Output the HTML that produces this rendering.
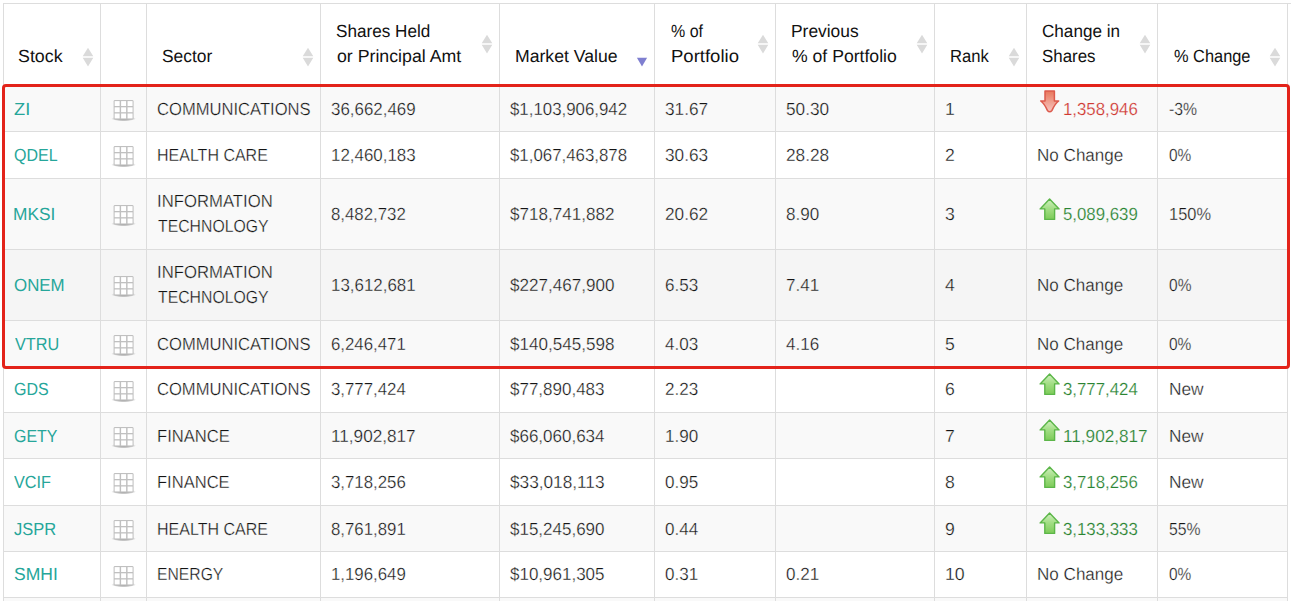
<!DOCTYPE html>
<html lang="en"><head><meta charset="utf-8"><title>Holdings</title>
<style>
html,body{margin:0;padding:0;background:#fff;}
body{width:1291px;height:601px;overflow:hidden;position:relative;
 font-family:"Liberation Sans",sans-serif;font-size:17.6px;line-height:24.64px;color:#141414;text-rendering:geometricPrecision;}
#wrap{position:absolute;left:3px;top:3px;width:1288px;border-top:1px solid #ddd;}
table{border-collapse:separate;border-spacing:0;table-layout:fixed;width:1285px;border-right:1px solid #ddd;margin:0;}
th,td{box-sizing:border-box;position:relative;border-left:1px solid #ddd;white-space:nowrap;text-align:left;font-weight:normal;overflow:visible;}
th{height:81px;padding:0 0 16px 15px;vertical-align:bottom;color:#111;line-height:25px;}
td{border-top:1px solid #ddd;padding:0 0 0 10px;vertical-align:middle;-webkit-text-stroke:.3px var(--bg);}
tr.odd{--bg:#f9f9f9;} tr.even{--bg:#fff;} tr.hover{--bg:#f5f5f5;}
tbody tr{background:var(--bg);}
tr.dy td{padding-top:2px;}
td.chg{padding-left:36.2px;}
.t{display:inline-block;transform-origin:0 50%;}
.tk{color:#26a69a;-webkit-text-stroke:0;}
.up{color:#2a8432;-webkit-text-stroke-width:.2px;}
.dn{color:#d03a33;-webkit-text-stroke-width:.2px;}
svg{position:absolute;overflow:visible;}
#box{position:absolute;left:2px;top:84px;width:1288px;height:285px;box-sizing:border-box;
 border:3px solid #e3231a;border-radius:4px;}
</style></head><body>
<div id="wrap"><table>
<colgroup><col style="width:97px"><col style="width:46px"><col style="width:174px"><col style="width:179px"><col style="width:155px"><col style="width:121px"><col style="width:159px"><col style="width:92px"><col style="width:131px"><col style="width:130px"></colgroup>
<thead><tr>
<th><span class="t" style="transform:scaleX(1.0122);margin-left:-1.00px">Stock</span><svg style="right:6px;top:43px" width="12" height="20" viewBox="0 0 12 20"><path d="M6 0.8 L11.3 9.3 L0.7 9.3 Z M6 19.4 L11.3 10.7 L0.7 10.7 Z" fill="#dadada"/></svg></th>
<th></th>
<th><span class="t" style="transform:scaleX(0.9893)">Sector</span><svg style="right:6px;top:43px" width="12" height="20" viewBox="0 0 12 20"><path d="M6 0.8 L11.3 9.3 L0.7 9.3 Z M6 19.4 L11.3 10.7 L0.7 10.7 Z" fill="#dadada"/></svg></th>
<th><span class="t" style="transform:scaleX(0.9737)">Shares Held</span><br><span class="t" style="transform:scaleX(1.0077);margin-left:1.01px">or Principal Amt</span><svg style="right:6px;top:30px" width="12" height="20" viewBox="0 0 12 20"><path d="M6 0.8 L11.3 9.3 L0.7 9.3 Z M6 19.4 L11.3 10.7 L0.7 10.7 Z" fill="#dadada"/></svg></th>
<th><span class="t" style="transform:scaleX(1.0016)">Market Value</span><svg style="right:6px;top:43px" width="12" height="20" viewBox="0 0 12 20"><path d="M6 19.4 L11.1 10.8 L0.9 10.8 Z" fill="#7f7fd0"/></svg></th>
<th><span class="t" style="transform:scaleX(0.9106);margin-left:1.00px">% of</span><br><span class="t" style="transform:scaleX(1.0525);margin-left:1.01px">Portfolio</span><svg style="right:6px;top:30px" width="12" height="20" viewBox="0 0 12 20"><path d="M6 0.8 L11.3 9.3 L0.7 9.3 Z M6 19.4 L11.3 10.7 L0.7 10.7 Z" fill="#dadada"/></svg></th>
<th><span class="t" style="transform:scaleX(0.9883)">Previous</span><br><span class="t" style="transform:scaleX(1.0016);margin-left:1.01px">% of Portfolio</span><svg style="right:6px;top:30px" width="12" height="20" viewBox="0 0 12 20"><path d="M6 0.8 L11.3 9.3 L0.7 9.3 Z M6 19.4 L11.3 10.7 L0.7 10.7 Z" fill="#dadada"/></svg></th>
<th><span class="t" style="transform:scaleX(0.9451)">Rank</span><svg style="right:6px;top:43px" width="12" height="20" viewBox="0 0 12 20"><path d="M6 0.8 L11.3 9.3 L0.7 9.3 Z M6 19.4 L11.3 10.7 L0.7 10.7 Z" fill="#dadada"/></svg></th>
<th><span class="t" style="transform:scaleX(0.9722)">Change in</span><br><span class="t" style="transform:scaleX(0.9598)">Shares</span><svg style="right:6px;top:30px" width="12" height="20" viewBox="0 0 12 20"><path d="M6 0.8 L11.3 9.3 L0.7 9.3 Z M6 19.4 L11.3 10.7 L0.7 10.7 Z" fill="#dadada"/></svg></th>
<th><span class="t" style="transform:scaleX(0.9307);margin-left:1.01px">% Change</span><svg style="right:6px;top:43px" width="12" height="20" viewBox="0 0 12 20"><path d="M6 0.8 L11.3 9.3 L0.7 9.3 Z M6 19.4 L11.3 10.7 L0.7 10.7 Z" fill="#dadada"/></svg></th>
</tr></thead>
<tbody>
<tr class="odd dy" style="height:46px"><td><span class="t tk" style="transform:scaleX(1.0377)">ZI</span></td><td><svg style="left:10px;top:13px" width="26" height="23" viewBox="0 0 26 23"><defs><radialGradient id="sh0" cx="50%" cy="50%" r="50%"><stop offset="0" stop-color="#777" stop-opacity=".9"/><stop offset=".7" stop-color="#909090" stop-opacity=".5"/><stop offset="1" stop-color="#aaa" stop-opacity="0"/></radialGradient></defs><ellipse cx="12.6" cy="19.7" rx="12.4" ry="2.6" fill="url(#sh0)"/><rect x="2.6" y="1" width="20" height="19.5" rx="1.4" fill="#c0c0c0"/><rect x="3.65" y="2.10" width="5" height="4.9" fill="#fff"/><rect x="10.10" y="2.10" width="5" height="4.9" fill="#fff"/><rect x="16.55" y="2.10" width="5" height="4.9" fill="#fff"/><rect x="3.65" y="8.30" width="5" height="4.9" fill="#fff"/><rect x="10.10" y="8.30" width="5" height="4.9" fill="#fff"/><rect x="16.55" y="8.30" width="5" height="4.9" fill="#fff"/><rect x="3.65" y="14.50" width="5" height="4.9" fill="#fff"/><rect x="10.10" y="14.50" width="5" height="4.9" fill="#fff"/><rect x="16.55" y="14.50" width="5" height="4.9" fill="#fff"/></svg></td><td><span class="t" style="transform:scaleX(0.9428)">COMMUNICATIONS</span></td><td><span class="t" style="transform:scaleX(0.9614)">36,662,469</span></td><td><span class="t" style="transform:scaleX(0.9575)">$1,103,906,942</span></td><td><span class="t" style="transform:scaleX(0.9784)">31.67</span></td><td><span class="t" style="transform:scaleX(0.9784)">50.30</span></td><td><span class="t">1</span></td><td class="chg"><svg style="left:12px;top:4px" width="22" height="24" viewBox="0 0 22 24"><defs><linearGradient id="dg0" x1="0" y1="0" x2="0" y2="1"><stop offset="0" stop-color="#e8785c"/><stop offset="1" stop-color="#f7c4c0"/></linearGradient></defs><path d="M6 1 L15.4 1 L15.4 11 L19.7 11 C16.4 13.2 14.6 16.8 13 20.4 Q10.7 23 8.4 20.4 C6.8 16.8 5 13.2 1.7 11 L6 11 Z" fill="url(#dg0)" stroke="#dc5a4c" stroke-width="1.5" stroke-linejoin="round"/></svg><span class="t dn" style="transform:scaleX(0.9554);margin-left:-0.19px">1,358,946</span></td><td><span class="t" style="transform:scaleX(0.8973);margin-left:1.00px">-3%</span></td></tr>
<tr class="even" style="height:47px"><td><span class="t tk" style="transform:scaleX(0.9091)">QDEL</span></td><td><svg style="left:10px;top:13px" width="26" height="23" viewBox="0 0 26 23"><defs><radialGradient id="sh1" cx="50%" cy="50%" r="50%"><stop offset="0" stop-color="#777" stop-opacity=".9"/><stop offset=".7" stop-color="#909090" stop-opacity=".5"/><stop offset="1" stop-color="#aaa" stop-opacity="0"/></radialGradient></defs><ellipse cx="12.6" cy="19.7" rx="12.4" ry="2.6" fill="url(#sh1)"/><rect x="2.6" y="1" width="20" height="19.5" rx="1.4" fill="#c0c0c0"/><rect x="3.65" y="2.10" width="5" height="4.9" fill="#fff"/><rect x="10.10" y="2.10" width="5" height="4.9" fill="#fff"/><rect x="16.55" y="2.10" width="5" height="4.9" fill="#fff"/><rect x="3.65" y="8.30" width="5" height="4.9" fill="#fff"/><rect x="10.10" y="8.30" width="5" height="4.9" fill="#fff"/><rect x="16.55" y="8.30" width="5" height="4.9" fill="#fff"/><rect x="3.65" y="14.50" width="5" height="4.9" fill="#fff"/><rect x="10.10" y="14.50" width="5" height="4.9" fill="#fff"/><rect x="16.55" y="14.50" width="5" height="4.9" fill="#fff"/></svg></td><td><span class="t" style="transform:scaleX(0.9095)">HEALTH CARE</span></td><td><span class="t" style="transform:scaleX(0.9614)">12,460,183</span></td><td><span class="t" style="transform:scaleX(0.9575)">$1,067,463,878</span></td><td><span class="t" style="transform:scaleX(0.9784)">30.63</span></td><td><span class="t" style="transform:scaleX(0.9784)">28.28</span></td><td><span class="t">2</span></td><td><span class="t" style="transform:scaleX(0.9699)">No Change</span></td><td><span class="t" style="transform:scaleX(0.8778);margin-left:1.01px">0%</span></td></tr>
<tr class="odd" style="height:71px"><td><span class="t tk" style="transform:scaleX(0.9840);margin-left:-1.00px">MKSI</span></td><td><svg style="left:10px;top:25px" width="26" height="23" viewBox="0 0 26 23"><defs><radialGradient id="sh2" cx="50%" cy="50%" r="50%"><stop offset="0" stop-color="#777" stop-opacity=".9"/><stop offset=".7" stop-color="#909090" stop-opacity=".5"/><stop offset="1" stop-color="#aaa" stop-opacity="0"/></radialGradient></defs><ellipse cx="12.6" cy="19.7" rx="12.4" ry="2.6" fill="url(#sh2)"/><rect x="2.6" y="1" width="20" height="19.5" rx="1.4" fill="#c0c0c0"/><rect x="3.65" y="2.10" width="5" height="4.9" fill="#fff"/><rect x="10.10" y="2.10" width="5" height="4.9" fill="#fff"/><rect x="16.55" y="2.10" width="5" height="4.9" fill="#fff"/><rect x="3.65" y="8.30" width="5" height="4.9" fill="#fff"/><rect x="10.10" y="8.30" width="5" height="4.9" fill="#fff"/><rect x="16.55" y="8.30" width="5" height="4.9" fill="#fff"/><rect x="3.65" y="14.50" width="5" height="4.9" fill="#fff"/><rect x="10.10" y="14.50" width="5" height="4.9" fill="#fff"/><rect x="16.55" y="14.50" width="5" height="4.9" fill="#fff"/></svg></td><td><span class="t" style="transform:scaleX(0.9496)">INFORMATION</span><br><span class="t" style="transform:scaleX(0.8976);margin-left:1.01px">TECHNOLOGY</span></td><td><span class="t" style="transform:scaleX(0.9554)">8,482,732</span></td><td><span class="t" style="transform:scaleX(0.9700)">$718,741,882</span></td><td><span class="t" style="transform:scaleX(0.9784)">20.62</span></td><td><span class="t" style="transform:scaleX(0.9696)">8.90</span></td><td><span class="t">3</span></td><td class="chg"><svg style="left:12px;top:19px" width="22" height="23" viewBox="0 0 22 23"><defs><linearGradient id="ug2" x1="0" y1="0" x2="0" y2="1"><stop offset="0" stop-color="#d2f0c2"/><stop offset=".45" stop-color="#a5df88"/><stop offset="1" stop-color="#7ccb58"/></linearGradient></defs><path d="M10.6 0.9 L20.1 10.9 L15.6 10.9 L15.6 21.4 L5.8 21.4 L5.8 10.9 L1.1 10.9 Z" fill="url(#ug2)" stroke="#5cb649" stroke-width="1.4" stroke-linejoin="round"/></svg><span class="t up" style="transform:scaleX(0.9554);margin-left:-0.19px">5,089,639</span></td><td><span class="t" style="transform:scaleX(0.9329);margin-left:1.01px">150%</span></td></tr>
<tr class="even hover" style="height:71px"><td><span class="t tk" style="transform:scaleX(0.9597)">ONEM</span></td><td><svg style="left:10px;top:25px" width="26" height="23" viewBox="0 0 26 23"><defs><radialGradient id="sh3" cx="50%" cy="50%" r="50%"><stop offset="0" stop-color="#777" stop-opacity=".9"/><stop offset=".7" stop-color="#909090" stop-opacity=".5"/><stop offset="1" stop-color="#aaa" stop-opacity="0"/></radialGradient></defs><ellipse cx="12.6" cy="19.7" rx="12.4" ry="2.6" fill="url(#sh3)"/><rect x="2.6" y="1" width="20" height="19.5" rx="1.4" fill="#c0c0c0"/><rect x="3.65" y="2.10" width="5" height="4.9" fill="#fff"/><rect x="10.10" y="2.10" width="5" height="4.9" fill="#fff"/><rect x="16.55" y="2.10" width="5" height="4.9" fill="#fff"/><rect x="3.65" y="8.30" width="5" height="4.9" fill="#fff"/><rect x="10.10" y="8.30" width="5" height="4.9" fill="#fff"/><rect x="16.55" y="8.30" width="5" height="4.9" fill="#fff"/><rect x="3.65" y="14.50" width="5" height="4.9" fill="#fff"/><rect x="10.10" y="14.50" width="5" height="4.9" fill="#fff"/><rect x="16.55" y="14.50" width="5" height="4.9" fill="#fff"/></svg></td><td><span class="t" style="transform:scaleX(0.9500)">INFORMATION</span><br><span class="t" style="transform:scaleX(0.8984);margin-left:1.00px">TECHNOLOGY</span></td><td><span class="t" style="transform:scaleX(0.9614)">13,612,681</span></td><td><span class="t" style="transform:scaleX(0.9700)">$227,467,900</span></td><td><span class="t" style="transform:scaleX(0.9696)">6.53</span></td><td><span class="t" style="transform:scaleX(0.9696)">7.41</span></td><td><span class="t">4</span></td><td><span class="t" style="transform:scaleX(0.9688)">No Change</span></td><td><span class="t" style="transform:scaleX(0.8817);margin-left:1.01px">0%</span></td></tr>
<tr class="odd dy" style="height:46px"><td><span class="t tk" style="transform:scaleX(0.9246);margin-left:1.01px">VTRU</span></td><td><svg style="left:10px;top:13px" width="26" height="23" viewBox="0 0 26 23"><defs><radialGradient id="sh4" cx="50%" cy="50%" r="50%"><stop offset="0" stop-color="#777" stop-opacity=".9"/><stop offset=".7" stop-color="#909090" stop-opacity=".5"/><stop offset="1" stop-color="#aaa" stop-opacity="0"/></radialGradient></defs><ellipse cx="12.6" cy="19.7" rx="12.4" ry="2.6" fill="url(#sh4)"/><rect x="2.6" y="1" width="20" height="19.5" rx="1.4" fill="#c0c0c0"/><rect x="3.65" y="2.10" width="5" height="4.9" fill="#fff"/><rect x="10.10" y="2.10" width="5" height="4.9" fill="#fff"/><rect x="16.55" y="2.10" width="5" height="4.9" fill="#fff"/><rect x="3.65" y="8.30" width="5" height="4.9" fill="#fff"/><rect x="10.10" y="8.30" width="5" height="4.9" fill="#fff"/><rect x="16.55" y="8.30" width="5" height="4.9" fill="#fff"/><rect x="3.65" y="14.50" width="5" height="4.9" fill="#fff"/><rect x="10.10" y="14.50" width="5" height="4.9" fill="#fff"/><rect x="16.55" y="14.50" width="5" height="4.9" fill="#fff"/></svg></td><td><span class="t" style="transform:scaleX(0.9428)">COMMUNICATIONS</span></td><td><span class="t" style="transform:scaleX(0.9554)">6,246,471</span></td><td><span class="t" style="transform:scaleX(0.9700)">$140,545,598</span></td><td><span class="t" style="transform:scaleX(0.9696)">4.03</span></td><td><span class="t" style="transform:scaleX(0.9696)">4.16</span></td><td><span class="t">5</span></td><td><span class="t" style="transform:scaleX(0.9680)">No Change</span></td><td><span class="t" style="transform:scaleX(0.8806);margin-left:1.00px">0%</span></td></tr>
<tr class="even" style="height:46px"><td><span class="t tk" style="transform:scaleX(0.9101)">GDS</span></td><td><svg style="left:10px;top:13px" width="26" height="23" viewBox="0 0 26 23"><defs><radialGradient id="sh5" cx="50%" cy="50%" r="50%"><stop offset="0" stop-color="#777" stop-opacity=".9"/><stop offset=".7" stop-color="#909090" stop-opacity=".5"/><stop offset="1" stop-color="#aaa" stop-opacity="0"/></radialGradient></defs><ellipse cx="12.6" cy="19.7" rx="12.4" ry="2.6" fill="url(#sh5)"/><rect x="2.6" y="1" width="20" height="19.5" rx="1.4" fill="#c0c0c0"/><rect x="3.65" y="2.10" width="5" height="4.9" fill="#fff"/><rect x="10.10" y="2.10" width="5" height="4.9" fill="#fff"/><rect x="16.55" y="2.10" width="5" height="4.9" fill="#fff"/><rect x="3.65" y="8.30" width="5" height="4.9" fill="#fff"/><rect x="10.10" y="8.30" width="5" height="4.9" fill="#fff"/><rect x="16.55" y="8.30" width="5" height="4.9" fill="#fff"/><rect x="3.65" y="14.50" width="5" height="4.9" fill="#fff"/><rect x="10.10" y="14.50" width="5" height="4.9" fill="#fff"/><rect x="16.55" y="14.50" width="5" height="4.9" fill="#fff"/></svg></td><td><span class="t" style="transform:scaleX(0.9420)">COMMUNICATIONS</span></td><td><span class="t" style="transform:scaleX(0.9554)">3,777,424</span></td><td><span class="t" style="transform:scaleX(0.9661)">$77,890,483</span></td><td><span class="t" style="transform:scaleX(0.9696)">2.23</span></td><td></td><td><span class="t">6</span></td><td class="chg"><svg style="left:12px;top:6px" width="22" height="23" viewBox="0 0 22 23"><defs><linearGradient id="ug5" x1="0" y1="0" x2="0" y2="1"><stop offset="0" stop-color="#d2f0c2"/><stop offset=".45" stop-color="#a5df88"/><stop offset="1" stop-color="#7ccb58"/></linearGradient></defs><path d="M10.6 0.9 L20.1 10.9 L15.6 10.9 L15.6 21.4 L5.8 21.4 L5.8 10.9 L1.1 10.9 Z" fill="url(#ug5)" stroke="#5cb649" stroke-width="1.4" stroke-linejoin="round"/></svg><span class="t up" style="transform:scaleX(0.9554);margin-left:-0.19px">3,777,424</span></td><td><span class="t" style="transform:scaleX(0.9830);margin-left:1.00px">New</span></td></tr>
<tr class="odd dy" style="height:46px"><td><span class="t tk" style="transform:scaleX(0.9066)">GETY</span></td><td><svg style="left:10px;top:13px" width="26" height="23" viewBox="0 0 26 23"><defs><radialGradient id="sh6" cx="50%" cy="50%" r="50%"><stop offset="0" stop-color="#777" stop-opacity=".9"/><stop offset=".7" stop-color="#909090" stop-opacity=".5"/><stop offset="1" stop-color="#aaa" stop-opacity="0"/></radialGradient></defs><ellipse cx="12.6" cy="19.7" rx="12.4" ry="2.6" fill="url(#sh6)"/><rect x="2.6" y="1" width="20" height="19.5" rx="1.4" fill="#c0c0c0"/><rect x="3.65" y="2.10" width="5" height="4.9" fill="#fff"/><rect x="10.10" y="2.10" width="5" height="4.9" fill="#fff"/><rect x="16.55" y="2.10" width="5" height="4.9" fill="#fff"/><rect x="3.65" y="8.30" width="5" height="4.9" fill="#fff"/><rect x="10.10" y="8.30" width="5" height="4.9" fill="#fff"/><rect x="16.55" y="8.30" width="5" height="4.9" fill="#fff"/><rect x="3.65" y="14.50" width="5" height="4.9" fill="#fff"/><rect x="10.10" y="14.50" width="5" height="4.9" fill="#fff"/><rect x="16.55" y="14.50" width="5" height="4.9" fill="#fff"/></svg></td><td><span class="t" style="transform:scaleX(0.9446)">FINANCE</span></td><td><span class="t" style="transform:scaleX(0.9759)">11,902,817</span></td><td><span class="t" style="transform:scaleX(0.9661)">$66,060,634</span></td><td><span class="t" style="transform:scaleX(0.9696)">1.90</span></td><td></td><td><span class="t">7</span></td><td class="chg"><svg style="left:12px;top:6px" width="22" height="23" viewBox="0 0 22 23"><defs><linearGradient id="ug6" x1="0" y1="0" x2="0" y2="1"><stop offset="0" stop-color="#d2f0c2"/><stop offset=".45" stop-color="#a5df88"/><stop offset="1" stop-color="#7ccb58"/></linearGradient></defs><path d="M10.6 0.9 L20.1 10.9 L15.6 10.9 L15.6 21.4 L5.8 21.4 L5.8 10.9 L1.1 10.9 Z" fill="url(#ug6)" stroke="#5cb649" stroke-width="1.4" stroke-linejoin="round"/></svg><span class="t up" style="transform:scaleX(0.9759);margin-left:-0.19px">11,902,817</span></td><td><span class="t" style="transform:scaleX(0.9771);margin-left:1.00px">New</span></td></tr>
<tr class="even" style="height:47px"><td><span class="t tk" style="transform:scaleX(0.9220)">VCIF</span></td><td><svg style="left:10px;top:13px" width="26" height="23" viewBox="0 0 26 23"><defs><radialGradient id="sh7" cx="50%" cy="50%" r="50%"><stop offset="0" stop-color="#777" stop-opacity=".9"/><stop offset=".7" stop-color="#909090" stop-opacity=".5"/><stop offset="1" stop-color="#aaa" stop-opacity="0"/></radialGradient></defs><ellipse cx="12.6" cy="19.7" rx="12.4" ry="2.6" fill="url(#sh7)"/><rect x="2.6" y="1" width="20" height="19.5" rx="1.4" fill="#c0c0c0"/><rect x="3.65" y="2.10" width="5" height="4.9" fill="#fff"/><rect x="10.10" y="2.10" width="5" height="4.9" fill="#fff"/><rect x="16.55" y="2.10" width="5" height="4.9" fill="#fff"/><rect x="3.65" y="8.30" width="5" height="4.9" fill="#fff"/><rect x="10.10" y="8.30" width="5" height="4.9" fill="#fff"/><rect x="16.55" y="8.30" width="5" height="4.9" fill="#fff"/><rect x="3.65" y="14.50" width="5" height="4.9" fill="#fff"/><rect x="10.10" y="14.50" width="5" height="4.9" fill="#fff"/><rect x="16.55" y="14.50" width="5" height="4.9" fill="#fff"/></svg></td><td><span class="t" style="transform:scaleX(0.9403)">FINANCE</span></td><td><span class="t" style="transform:scaleX(0.9554)">3,718,256</span></td><td><span class="t" style="transform:scaleX(0.9791)">$33,018,113</span></td><td><span class="t" style="transform:scaleX(0.9696)">0.95</span></td><td></td><td><span class="t">8</span></td><td class="chg"><svg style="left:12px;top:7px" width="22" height="23" viewBox="0 0 22 23"><defs><linearGradient id="ug7" x1="0" y1="0" x2="0" y2="1"><stop offset="0" stop-color="#d2f0c2"/><stop offset=".45" stop-color="#a5df88"/><stop offset="1" stop-color="#7ccb58"/></linearGradient></defs><path d="M10.6 0.9 L20.1 10.9 L15.6 10.9 L15.6 21.4 L5.8 21.4 L5.8 10.9 L1.1 10.9 Z" fill="url(#ug7)" stroke="#5cb649" stroke-width="1.4" stroke-linejoin="round"/></svg><span class="t up" style="transform:scaleX(0.9554);margin-left:-0.19px">3,718,256</span></td><td><span class="t" style="transform:scaleX(0.9830);margin-left:1.00px">New</span></td></tr>
<tr class="odd dy" style="height:46px"><td><span class="t tk" style="transform:scaleX(0.9385)">JSPR</span></td><td><svg style="left:10px;top:13px" width="26" height="23" viewBox="0 0 26 23"><defs><radialGradient id="sh8" cx="50%" cy="50%" r="50%"><stop offset="0" stop-color="#777" stop-opacity=".9"/><stop offset=".7" stop-color="#909090" stop-opacity=".5"/><stop offset="1" stop-color="#aaa" stop-opacity="0"/></radialGradient></defs><ellipse cx="12.6" cy="19.7" rx="12.4" ry="2.6" fill="url(#sh8)"/><rect x="2.6" y="1" width="20" height="19.5" rx="1.4" fill="#c0c0c0"/><rect x="3.65" y="2.10" width="5" height="4.9" fill="#fff"/><rect x="10.10" y="2.10" width="5" height="4.9" fill="#fff"/><rect x="16.55" y="2.10" width="5" height="4.9" fill="#fff"/><rect x="3.65" y="8.30" width="5" height="4.9" fill="#fff"/><rect x="10.10" y="8.30" width="5" height="4.9" fill="#fff"/><rect x="16.55" y="8.30" width="5" height="4.9" fill="#fff"/><rect x="3.65" y="14.50" width="5" height="4.9" fill="#fff"/><rect x="10.10" y="14.50" width="5" height="4.9" fill="#fff"/><rect x="16.55" y="14.50" width="5" height="4.9" fill="#fff"/></svg></td><td><span class="t" style="transform:scaleX(0.9104)">HEALTH CARE</span></td><td><span class="t" style="transform:scaleX(0.9554)">8,761,891</span></td><td><span class="t" style="transform:scaleX(0.9661)">$15,245,690</span></td><td><span class="t" style="transform:scaleX(0.9696)">0.44</span></td><td></td><td><span class="t">9</span></td><td class="chg"><svg style="left:12px;top:6px" width="22" height="23" viewBox="0 0 22 23"><defs><linearGradient id="ug8" x1="0" y1="0" x2="0" y2="1"><stop offset="0" stop-color="#d2f0c2"/><stop offset=".45" stop-color="#a5df88"/><stop offset="1" stop-color="#7ccb58"/></linearGradient></defs><path d="M10.6 0.9 L20.1 10.9 L15.6 10.9 L15.6 21.4 L5.8 21.4 L5.8 10.9 L1.1 10.9 Z" fill="url(#ug8)" stroke="#5cb649" stroke-width="1.4" stroke-linejoin="round"/></svg><span class="t up" style="transform:scaleX(0.9554);margin-left:-0.19px">3,133,333</span></td><td><span class="t" style="transform:scaleX(0.8960);margin-left:1.01px">55%</span></td></tr>
<tr class="even" style="height:46px"><td><span class="t tk" style="transform:scaleX(0.9964)">SMHI</span></td><td><svg style="left:10px;top:13px" width="26" height="23" viewBox="0 0 26 23"><defs><radialGradient id="sh9" cx="50%" cy="50%" r="50%"><stop offset="0" stop-color="#777" stop-opacity=".9"/><stop offset=".7" stop-color="#909090" stop-opacity=".5"/><stop offset="1" stop-color="#aaa" stop-opacity="0"/></radialGradient></defs><ellipse cx="12.6" cy="19.7" rx="12.4" ry="2.6" fill="url(#sh9)"/><rect x="2.6" y="1" width="20" height="19.5" rx="1.4" fill="#c0c0c0"/><rect x="3.65" y="2.10" width="5" height="4.9" fill="#fff"/><rect x="10.10" y="2.10" width="5" height="4.9" fill="#fff"/><rect x="16.55" y="2.10" width="5" height="4.9" fill="#fff"/><rect x="3.65" y="8.30" width="5" height="4.9" fill="#fff"/><rect x="10.10" y="8.30" width="5" height="4.9" fill="#fff"/><rect x="16.55" y="8.30" width="5" height="4.9" fill="#fff"/><rect x="3.65" y="14.50" width="5" height="4.9" fill="#fff"/><rect x="10.10" y="14.50" width="5" height="4.9" fill="#fff"/><rect x="16.55" y="14.50" width="5" height="4.9" fill="#fff"/></svg></td><td><span class="t" style="transform:scaleX(0.8928)">ENERGY</span></td><td><span class="t" style="transform:scaleX(0.9554)">1,196,649</span></td><td><span class="t" style="transform:scaleX(0.9661)">$10,961,305</span></td><td><span class="t" style="transform:scaleX(0.9696)">0.31</span></td><td><span class="t" style="transform:scaleX(0.9696)">0.21</span></td><td><span class="t" style="transform:scaleX(1.0083)">10</span></td><td><span class="t" style="transform:scaleX(0.9699)">No Change</span></td><td><span class="t" style="transform:scaleX(0.8778);margin-left:1.01px">0%</span></td></tr>
<tr class="odd" style="height:46px"><td></td><td></td><td></td><td></td><td></td><td></td><td></td><td></td><td></td><td></td></tr>
</tbody></table></div>
<div id="box"></div>
</body></html>
